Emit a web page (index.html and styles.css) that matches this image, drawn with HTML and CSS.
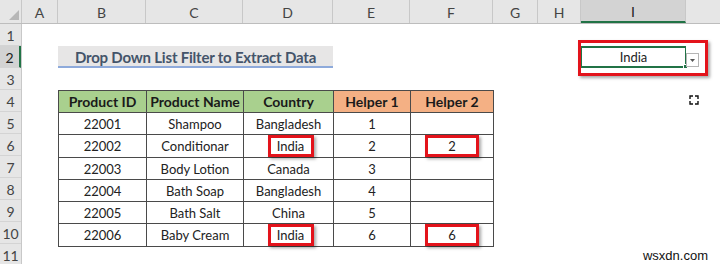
FILE: index.html
```html
<!DOCTYPE html>
<html>
<head>
<meta charset="utf-8">
<link rel="stylesheet" href="styles.css">
</head>
<body>
<div class="sheet">
  <div class="colhead">
    <div class="corner"><span class="tri"></span></div>
    <div class="ch w-a">A</div>
    <div class="ch w-b">B</div>
    <div class="ch w-c">C</div>
    <div class="ch w-d">D</div>
    <div class="ch w-e">E</div>
    <div class="ch w-f">F</div>
    <div class="ch w-g">G</div>
    <div class="ch w-h">H</div>
    <div class="ch w-i sel">I</div>
    <div class="ch w-j"></div>
  </div>
  <div class="body">
    <div class="rowheads">
      <div class="rh">1</div>
      <div class="rh sel">2</div>
      <div class="rh">3</div>
      <div class="rh">4</div>
      <div class="rh">5</div>
      <div class="rh">6</div>
      <div class="rh">7</div>
      <div class="rh">8</div>
      <div class="rh">9</div>
      <div class="rh">10</div>
      <div class="rh last">11</div>
    </div>
    <div class="grid">
      <div class="title">Drop Down List Filter to Extract Data</div>

      <div class="active">
        <span>India</span>
        <span class="handle"></span>
        <span class="ddbtn"><svg width="5" height="3" viewBox="0 0 5 3"><path d="M0 0h5L2.5 3z" fill="#555"/></svg></span>
        <span class="mark"></span>
      </div>

      <div class="cursor">
        <svg width="10" height="10" viewBox="0 0 10 10" fill="none" stroke="#111" stroke-width="1.4">
          <path d="M1 4V1h3M6 1h3v3M9 6v3H6M4 9H1V6"/>
        </svg>
      </div>

      <table class="data">
        <colgroup>
          <col class="c-b"><col class="c-c"><col class="c-d"><col class="c-e"><col class="c-f">
        </colgroup>
        <tr class="hd">
          <th class="g">Product ID</th><th class="g">Product Name</th><th class="g">Country</th><th class="o">Helper 1</th><th class="o">Helper 2</th>
        </tr>
        <tr><td>22001</td><td>Shampoo</td><td>Bangladesh</td><td>1</td><td></td></tr>
        <tr><td>22002</td><td>Conditionar</td><td><span class="box bx-d">India</span></td><td>2</td><td><span class="box bx-f">2</span></td></tr>
        <tr><td>22003</td><td>Body Lotion</td><td>Canada</td><td>3</td><td></td></tr>
        <tr><td>22004</td><td>Bath Soap</td><td>Bangladesh</td><td>4</td><td></td></tr>
        <tr><td>22005</td><td>Bath Salt</td><td>China</td><td>5</td><td></td></tr>
        <tr><td>22006</td><td>Baby Cream</td><td><span class="box bx-d">India</span></td><td>6</td><td><span class="box bx-f">6</span></td></tr>
      </table>
    </div>
  </div>
  <div class="watermark">wsxdn.com</div>
</div>
</body>
</html>
```

FILE: styles.css
```css
* { box-sizing: border-box; }
html, body { margin: 0; padding: 0; background: #fff; }
body {
  width: 720px;
  height: 267px;
  overflow: hidden;
  font-family: Lato, "Open Sans", sans-serif;
  color: #222;
}
.sheet { position: relative; width: 720px; height: 267px; }

/* column header */
.colhead {
  display: flex;
  height: 24px;
  background: #e6e6e6;
  border-bottom: 1px solid #bdbdbd;
}
.corner {
  width: 22px;
  position: relative;
  border-right: 1px solid #c8c8c8;
}
.tri {
  position: absolute;
  right: 2px;
  bottom: 3px;
  width: 0; height: 0;
  border-left: 10px solid transparent;
  border-bottom: 10px solid #b7b7b7;
}
.ch {
  display: flex;
  align-items: center;
  justify-content: center;
  font-size: 14px;
  color: #444;
  border-right: 1px solid #c8c8c8;
  padding-top: 1px;
}
.ch.sel { background: #d3d3d3; border-bottom: 2px solid #217346; color: #222; }
.w-a { width: 36px; }
.w-b { width: 88px; }
.w-c { width: 97px; }
.w-d { width: 90px; }
.w-e { width: 77px; }
.w-f { width: 83px; }
.w-g { width: 45px; }
.w-h { width: 43px; }
.w-i { width: 105px; }
.w-j { flex: 1; border-right: none; }

/* body */
.body { display: flex; }
.rowheads {
  width: 22px;
  display: flex;
  flex-direction: column;
  background: #e6e6e6;
  border-right: 1px solid #c8c8c8;
}
.rh {
  height: 22px;
  display: flex;
  align-items: center;
  justify-content: center;
  font-size: 14px;
  color: #444;
  border-bottom: 1px solid #d4d4d4;
  padding-top: 2px;
}
.rh.last { height: 20px; border-bottom: none; }
.rh.sel { background: #d3d3d3; border-right: 2px solid #217346; color: #222; }

.grid {
  flex: 1;
  display: grid;
  grid-template-columns: 36px 88px 97px 90px 77px 83px 45px 43px 105px 1fr;
  grid-template-rows: repeat(10, 22px) 20px;
}

.title {
  grid-column: 2 / 5;
  grid-row: 2;
  background: #e7e6e6;
  border-bottom: 2px solid #8eaadb;
  color: #44546a;
  font-weight: 700;
  font-size: 15px;
  letter-spacing: -0.2px;
  display: flex;
  align-items: center;
  justify-content: center;
  padding-top: 1px;
}

.active {
  grid-column: 9;
  grid-row: 2;
  position: relative;
  border: 2px solid #217346;
  border-right-width: 1px;
  display: flex;
  align-items: center;
  justify-content: center;
  font-size: 13px;
  color: #222;
  margin-left: -1px;
}
.handle {
  position: absolute;
  right: -3px;
  bottom: -3px;
  width: 5px; height: 5px;
  background: #217346;
  border: 1px solid #fff;
}
.ddbtn {
  position: absolute;
  left: calc(100% + 1px);
  top: 5px;
  width: 13px;
  height: 14px;
  border: 1px solid #b5b5b5;
  background: #fff;
  display: flex;
  align-items: center;
  justify-content: center;
}
.mark {
  position: absolute;
  left: -4px;
  top: -8px;
  right: -23px;
  bottom: -10px;
  border: 3px solid #e3131b;
  box-shadow: 2px 2px 3px rgba(0,0,0,0.35);
}

.cursor {
  grid-column: 10;
  grid-row: 4;
  margin: 5px 0 0 3px;
  line-height: 0;
}

.data {
  grid-column: 2 / 7;
  grid-row: 4 / 11;
  border-collapse: collapse;
  table-layout: fixed;
  width: 435px;
  margin-top: 0;
}
.c-b { width: 88px; }
.c-c { width: 97px; }
.c-d { width: 90px; }
.c-e { width: 77px; }
.c-f { width: 83px; }
.data th, .data td {
  height: 22px;
  padding: 0;
  border: 1px solid #4a4a4a;
  text-align: center;
  font-size: 13px;
  line-height: 18px;
  color: #222;
}
.data th { font-weight: 700; font-size: 14px; color: #1a1a1a; }
.data th.g { background: #a9d08e; }
.data th.o { background: #f4b084; }
.box {
  display: inline-block;
  border: 3px solid #e3131b;
  box-shadow: 2px 2px 3px rgba(0,0,0,0.35);
  height: 22px;
  line-height: 16px;
  vertical-align: middle;
}
.bx-d { width: 46px; margin-left: 4px; }
.bx-f { width: 54px; }

.watermark {
  position: absolute;
  right: 12px;
  bottom: 4px;
  font-family: "Liberation Sans", Arial, sans-serif;
  font-size: 13px;
  color: #111;
}
```
